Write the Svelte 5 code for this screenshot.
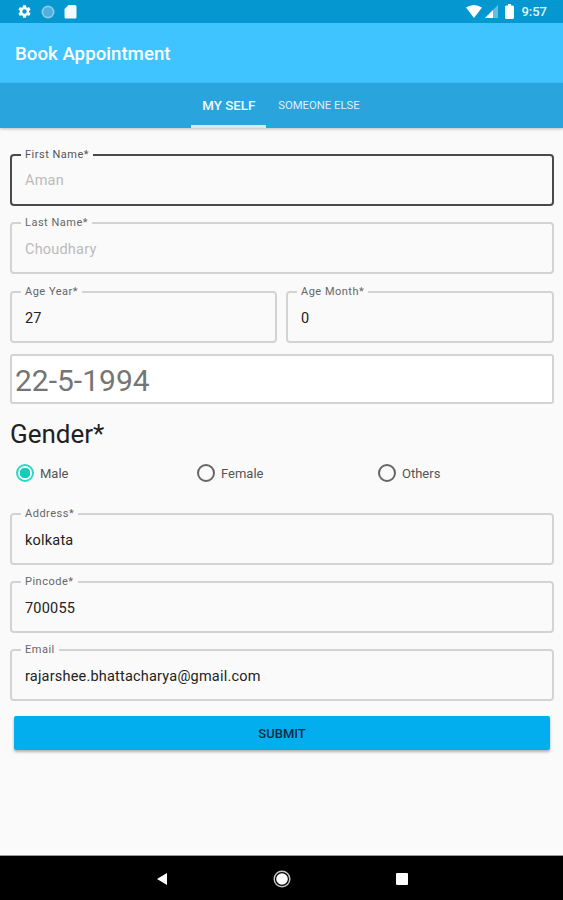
<script>
  const genders = ['Male', 'Female', 'Others'];
  let gender = $state('Male');
</script>

{#snippet field(label, value, cls = '')}
  <fieldset class="field {cls}">
    <legend>{label}</legend>
    <div class="value">{value}</div>
  </fieldset>
{/snippet}

<div class="screen">
  <div class="status">
    <div class="status-icons">
      <svg width="15" height="15" viewBox="0 0 24 24" fill="#fff"><path d="M19.4 13c.04-.32.07-.65.07-1s-.03-.68-.07-1l2.1-1.65c.2-.15.25-.42.12-.64l-2-3.46c-.12-.22-.39-.3-.61-.22l-2.49 1c-.52-.4-1.08-.73-1.69-.98l-.38-2.65A.49.49 0 0 0 14 2h-4c-.25 0-.46.18-.49.42l-.38 2.65c-.61.25-1.17.59-1.69.98l-2.49-1a.5.5 0 0 0-.61.22l-2 3.46c-.13.22-.07.49.12.64L4.57 11c-.04.32-.07.66-.07 1s.03.68.07 1l-2.11 1.65c-.19.15-.25.42-.12.64l2 3.46c.12.22.39.3.61.22l2.49-1c.52.4 1.08.73 1.69.98l.38 2.65c.03.24.24.42.49.42h4c.25 0 .46-.18.49-.42l.38-2.65c.61-.25 1.17-.59 1.69-.98l2.49 1c.23.09.49 0 .61-.22l2-3.46c.12-.22.07-.49-.12-.64L19.4 13zM12 15.5a3.5 3.5 0 1 1 0-7 3.5 3.5 0 0 1 0 7z"/></svg>
      <svg width="14" height="14" viewBox="0 0 14 14"><circle cx="7" cy="7" r="6.5" fill="#8cc9e8"/><circle cx="7" cy="7" r="4.8" fill="#4fb0e0"/></svg>
      <svg width="13" height="15" viewBox="0 0 13 15" fill="#f4fafd"><path d="M4.5 1H11a1.5 1.5 0 0 1 1.5 1.5v10.500A1.500 1.500 0 0 1 11 14.500H2A1.500 1.500 0 0 1 .5 13V5z"/></svg>
    </div>
    <div class="status-icons right">
      <svg width="16" height="13" viewBox="0 0 16 13" fill="#fff"><path d="M0 2.500Q8-2.500 16 2.500L8 13z"/></svg>
      <svg class="signal" width="13" height="13" viewBox="0 0 13 13"><path d="M13 0v13H0z" fill="#6bbbe0"/><path d="M8 5v8H0z" fill="#fff"/></svg>
      <svg class="battery" width="9" height="15" viewBox="0 0 9 15" fill="#fff"><path d="M3 0h3v1.500h1.500A1.500 1.500 0 0 1 9 3v10.500A1.500 1.500 0 0 1 7.500 15h-6A1.500 1.500 0 0 1 0 13.500V3a1.500 1.500 0 0 1 1.500-1.500H3z"/></svg>
      <span class="clock">9:57</span>
    </div>
  </div>

  <header class="appbar">Book Appointment</header>

  <nav class="tabs">
    <div class="tab active">MY SELF</div>
    <div class="tab">SOMEONE ELSE</div>
  </nav>

  <main class="form">
    {@render field('First Name*', 'Aman', 'focused muted')}
    {@render field('Last Name*', 'Choudhary', 'muted')}

    <div class="age-row">
      {@render field('Age Year*', '27')}
      {@render field('Age Month*', '0')}
    </div>

    <div class="date">22-5-1994</div>

    <div class="gender-title">Gender*</div>
    <div class="radios">
      {#each genders as g}
        <button class="radio" class:checked={gender === g} onclick={() => (gender = g)}>
          <span class="dot"></span>
          <span>{g}</span>
        </button>
      {/each}
    </div>

    <div class="stack">
      {@render field('Address*', 'kolkata')}
      {@render field('Pincode*', '700055')}
      {@render field('Email', 'rajarshee.bhattacharya@gmail.com')}
    </div>

    <button class="submit">SUBMIT</button>
  </main>

  <footer class="navbar">
    <svg width="12" height="14" viewBox="0 0 12 14" fill="#fff"><path d="M11 1v12L1 7z"/></svg>
    <svg width="18" height="18" viewBox="0 0 18 18"><circle cx="9" cy="9" r="5.800" fill="#fff"/><circle cx="9" cy="9" r="7.800" fill="none" stroke="#c9c9c9" stroke-width="1.400"/></svg>
    <svg width="12" height="12" viewBox="0 0 12 12" fill="#fff"><rect width="12" height="12" rx="1"/></svg>
  </footer>
</div>

<style>
  :global(body) {
    margin: 0;
    font-family: Roboto, 'Liberation Sans', sans-serif;
  }

  .screen {
    width: 563px;
    height: 900px;
    display: flex;
    flex-direction: column;
    background: #fafafa;
    overflow: hidden;
  }

  .status {
    height: 23px;
    flex: none;
    background: #0497d0;
    display: flex;
    align-items: center;
    justify-content: space-between;
    padding: 0 16px 0 17px;
  }

  .status-icons {
    display: flex;
    align-items: center;
    gap: 9px;
  }

  .status-icons.right {
    gap: 3px;
  }

  .signal {
    margin-right: 4px;
  }

  .battery {
    margin-right: 4px;
  }

  .clock {
    color: #e6f4fa;
    font-size: 13px;
    font-weight: 500;
  }

  .appbar {
    height: 60px;
    flex: none;
    background: #40c4ff;
    color: #fff;
    font-size: 18.7px;
    font-weight: 500;
    line-height: 62px;
    padding-left: 15px;
  }

  .tabs {
    height: 45px;
    flex: none;
    background: #29a4dd;
    display: flex;
    justify-content: center;
    box-sizing: border-box;
    box-shadow: 0 1px 3px rgba(0, 0, 0, 0.25);
    position: relative;
  }

  .tab {
    color: #dcf1fb;
    font-size: 11.3px;
    line-height: 45px;
    padding: 0 12px;
  }

  .tab.active {
    color: #f2fafe;
    font-size: 13.3px;
    font-weight: 500;
    width: 75px;
    box-sizing: border-box;
    text-align: center;
    padding: 0;
    border-bottom: 3px solid #dfe6ea;
  }

  .form {
    flex: 1;
    padding: 20px 9px 0 10px;
    display: flex;
    flex-direction: column;
    gap: 10px;
  }

  .field {
    margin: 0;
    padding: 0 9px;
    height: 58px;
    box-sizing: border-box;
    border: 2px solid #d3d3d3;
    border-radius: 4px;
    min-width: 0;
  }

  .field legend {
    padding: 0 4px;
    font-size: 11px;
    line-height: 13px;
    color: #666;
    letter-spacing: 0.5px;
  }

  .value {
    font-size: 14.500px;
    line-height: 17px;
    color: #222;
    margin: 11.5px 0 0 4px;
    letter-spacing: 0.2px;
  }

  .muted .value {
    color: #bbb;
  }

  .focused {
    border-color: #4a4a4a;
  }

  .focused legend {
    color: #555;
  }

  .focused .value {
    margin-top: 11px;
  }

  .age-row {
    display: grid;
    grid-template-columns: 267px 1fr;
    gap: 9px;
    margin-top: 1px;
  }

  .date {
    height: 50px;
    box-sizing: border-box;
    margin-top: 1px;
    background: #fff;
    border: 2px solid #d3d3d3;
    border-radius: 3px;
    padding-left: 3px;
    font-size: 30px;
    line-height: 49px;
    color: #757575;
  }

  .gender-title {
    font-size: 26px;
    line-height: 30px;
    color: #212121;
    margin-top: 5px;
  }

  .radios {
    display: flex;
    padding-left: 6px;
    margin-top: 4px;
  }

  .radio {
    flex: none;
    width: 181px;
    display: flex;
    align-items: center;
    gap: 6px;
    padding: 0;
    background: none;
    border: 0;
    font-family: inherit;
    font-size: 13px;
    color: #555;
    height: 20px;
  }

  .dot {
    width: 18px;
    height: 18px;
    box-sizing: border-box;
    border: 2px solid #666;
    border-radius: 50%;
    flex: none;
  }

  .radio.checked .dot {
    border-color: #2fd6c4;
    background: radial-gradient(circle, #12cfbb 0 5px, #fafafa 5.500px);
  }

  .stack {
    display: flex;
    flex-direction: column;
    gap: 10px;
    margin-top: 14px;
  }

  .submit {
    margin: 5px 4px 0;
    height: 34px;
    background: #03aeef;
    border: 0;
    border-radius: 2px;
    box-shadow: 0 2px 3px rgba(0, 0, 0, 0.3);
    color: #0b2a44;
    font-family: inherit;
    font-size: 13px;
    font-weight: 500;
  }

  .navbar {
    height: 45px;
    flex: none;
    background: #000;
    border-top: 1px solid #999;
    box-sizing: border-box;
    display: flex;
    align-items: center;
    justify-content: center;
    gap: 105px;
    padding-top: 2px;
  }
</style>
